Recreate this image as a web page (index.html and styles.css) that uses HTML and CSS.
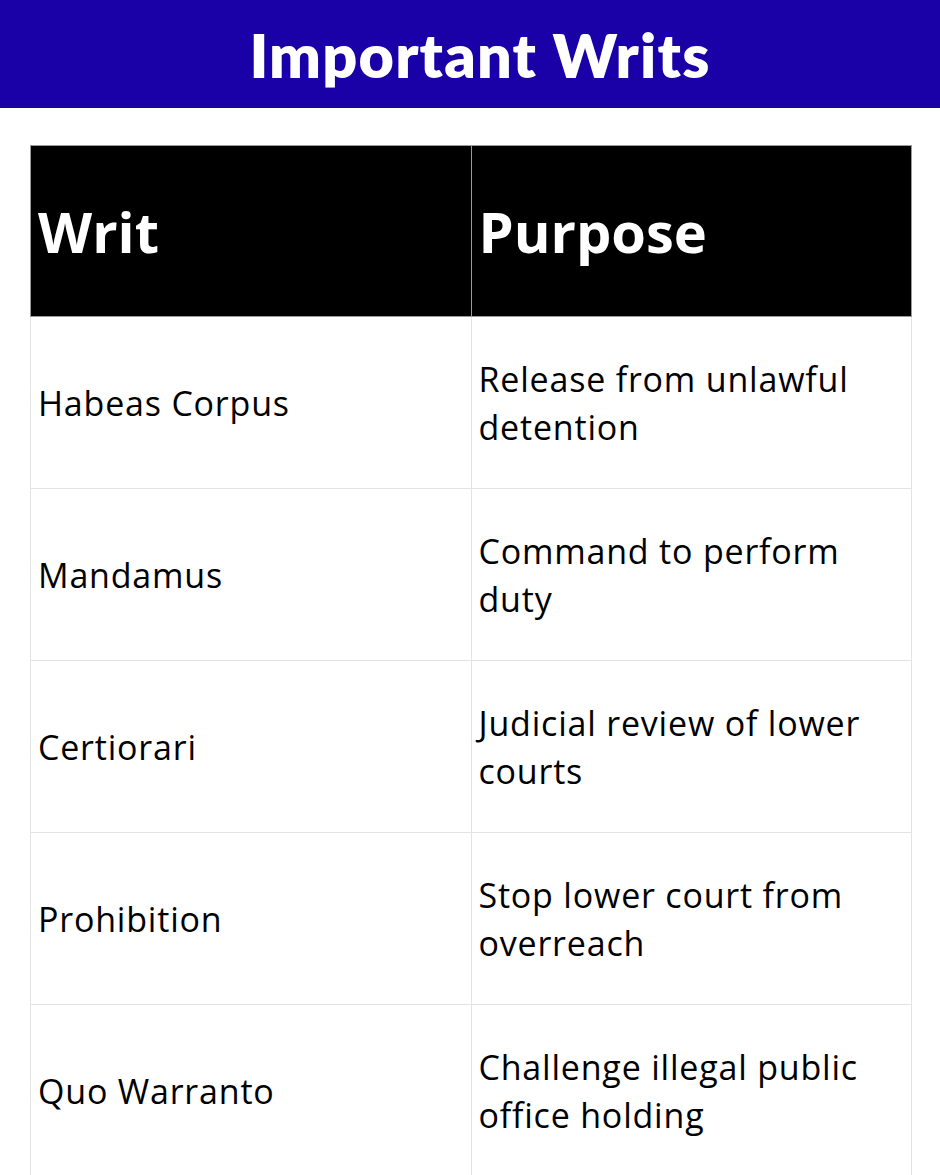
FILE: index.html
```html
<!DOCTYPE html>
<html>
<head>
<meta charset="utf-8">
<link rel="stylesheet" href="styles.css">
</head>
<body>
<header class="banner"><h1 class="title">Important Writs</h1></header>
<main class="wrap">
<table class="writs">
<thead>
<tr><th>Writ</th><th>Purpose</th></tr>
</thead>
<tbody>
<tr><td>Habeas Corpus</td><td>Release from unlawful detention</td></tr>
<tr><td>Mandamus</td><td>Command to perform duty</td></tr>
<tr><td>Certiorari</td><td>Judicial review of lower courts</td></tr>
<tr><td>Prohibition</td><td>Stop lower court from overreach</td></tr>
<tr><td>Quo Warranto</td><td>Challenge illegal public office holding</td></tr>
</tbody>
</table>
</main>
</body>
</html>
```
FILE: styles.css
```css
html, body { margin: 0; padding: 0; background: #ffffff; }
body { font-family: "Open Sans", "Liberation Sans", sans-serif; color: #000; }
.banner {
  background: #1900a7;
  height: 108px;
  display: flex;
  align-items: center;
  justify-content: center;
}
.title {
  margin: 0 0 0 20px;
  color: #fff;
  font-family: "Lato", "Open Sans", sans-serif;
  font-weight: 800;
  font-size: 61px;
  letter-spacing: 1.2px;
  line-height: 1;
  padding-top: 0;
}
.wrap { padding: 37px 28px 0 30px; }
.writs {
  width: 882px;
  border-collapse: collapse;
  table-layout: fixed;
}
.writs th, .writs td {
  width: 50%;
  box-sizing: border-box;
  text-align: left;
  vertical-align: middle;
  padding: 0 30px 0 7px;
}
.writs th {
  height: 171px;
  background: #000;
  color: #fff;
  font-weight: 700;
  font-size: 56px;
  border: 1px solid #9a9a9a;
  padding-top: 0;
}
.writs td {
  height: 172px;
  font-size: 34px;
  line-height: 48px;
  border: 1px solid #e3e3e3;
  letter-spacing: 0.8px;
}
```
